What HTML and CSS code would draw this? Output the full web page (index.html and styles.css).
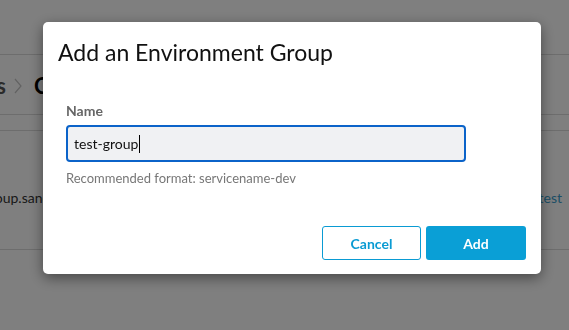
FILE: index.html
```html
<!DOCTYPE html>
<html lang="en">
<head>
  <meta charset="UTF-8">
  <meta name="viewport" content="width=device-width, initial-scale=1.0">
  <title>Add an Environment Group</title>
  <link rel="stylesheet" href="styles.css">
</head>
<body>
  <div class="page">
    <div class="topbar"></div>
    <div class="crumbs">
      <span class="crumb-prev">Environment Groups</span>
      <svg class="crumb-sep" width="8" height="16" viewBox="0 0 8 16"><polyline points="1,1 7,8 1,15" fill="none" stroke="#c4c4c4" stroke-width="1.2"/></svg>
      <span class="crumb-current">Catalog</span>
    </div>
    <div class="table-head"></div>
    <div class="table-row">
      <span class="cell-name">test-group.sandbox.example.com</span>
      <a class="cell-link" href="#">test</a>
    </div>
  </div>

  <div class="overlay">
    <div class="modal">
      <div class="modal-header">
        <h2 class="modal-title">Add an Environment Group</h2>
      </div>
      <div class="modal-body">
        <label class="field-label" for="groupName">Name</label>
        <div class="field-input">test-group<span class="caret"></span></div>
        <div class="field-help">Recommended format: servicename-dev</div>
      </div>
      <div class="modal-footer">
        <button class="btn btn-outline">Cancel</button>
        <button class="btn btn-primary">Add</button>
      </div>
    </div>
  </div>
</body>
</html>
```

FILE: styles.css
```css
body {
  font-family: Lato, 'Noto Sans', sans-serif;
  background-color: #fff;
  color: #333;
  margin: 0;
  overflow: hidden;
}

.page {
  width: 569px;
}

.topbar {
  height: 54px;
  border-bottom: 1px solid #dadada;
}

.crumbs {
  height: 60px;
  padding-top: 17px;
  box-sizing: border-box;
  display: flex;
  align-items: flex-start;
  font-size: 22px;
  font-weight: bold;
  border-bottom: 1px solid #dadada;
}

.crumb-prev {
  width: 6px;
  overflow: hidden;
  white-space: nowrap;
  direction: rtl;
  color: #555;
}

.crumb-sep {
  margin: 6px 12px 0 8px;
}

.crumb-current {
  color: #000;
}

.table-head {
  height: 15px;
  border-bottom: 1px solid #dadada;
}

.table-row {
  height: 119px;
  padding: 58px 7px 0 0;
  box-sizing: border-box;
  display: flex;
  justify-content: space-between;
  font-size: 14px;
  border-bottom: 1px solid #dadada;
}

.cell-name {
  text-indent: -46px;
  color: #333;
}

.cell-link {
  color: #3a9ecd;
  text-decoration: none;
}

.overlay {
  position: fixed;
  inset: 0;
  background-color: rgba(0, 0, 0, 0.5);
  padding: 22px 0 0 43px;
}

.modal {
  width: 498px;
  background-color: #fff;
  border-radius: 5px;
  box-shadow: 0 4px 14px rgba(0, 0, 0, 0.45);
}

.modal-header {
  padding: 17px 15px 0;
}

.modal-title {
  margin: 0;
  font-size: 23px;
  font-weight: normal;
  line-height: 26px;
  color: #111;
}

.modal-body {
  padding: 37px 23px 0;
}

.field-label {
  display: block;
  font-size: 14px;
  font-weight: bold;
  line-height: 17px;
  color: #666;
  margin-bottom: 6px;
}

.field-input {
  width: 400px;
  height: 37px;
  box-sizing: border-box;
  border: 2px solid #0b63c9;
  border-radius: 4px;
  background-color: #f0f1f3;
  padding: 0 6px;
  display: flex;
  align-items: center;
  font-size: 14px;
  color: #111;
}

.caret {
  display: inline-block;
  width: 1px;
  height: 18px;
  background-color: #000;
  margin-left: 1px;
}

.field-help {
  margin-top: 9px;
  font-size: 13px;
  line-height: 14px;
  color: #777;
}

.modal-footer {
  margin-top: 41px;
  padding: 0 15px 14px;
  display: flex;
  justify-content: flex-end;
  gap: 5px;
}

.btn {
  width: 100px;
  height: 34px;
  border-radius: 3px;
  font-family: Lato, sans-serif;
  font-size: 14px;
  font-weight: bold;
  cursor: pointer;
}

.btn-outline {
  width: 99px;
  background-color: #fff;
  color: #0a9bd3;
  border: 1px solid #0a9bd3;
}

.btn-primary {
  background-color: #0a9fd6;
  color: #fff;
  border: none;
}
```
